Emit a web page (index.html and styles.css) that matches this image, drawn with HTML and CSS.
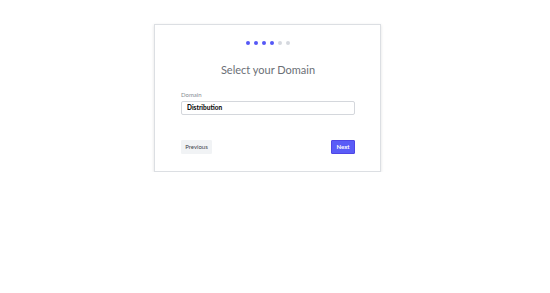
FILE: index.html
```html
<!DOCTYPE html>
<html lang="en">
<head>
<meta charset="utf-8">
<title>Select your Domain</title>
<link rel="stylesheet" href="styles.css">
</head>
<body>
  <div class="card">
    <div class="steps">
      <span class="dot done"></span>
      <span class="dot done"></span>
      <span class="dot done"></span>
      <span class="dot done"></span>
      <span class="dot"></span>
      <span class="dot"></span>
    </div>
    <h1 class="title">Select your Domain</h1>
    <div class="field">
      <label class="label" for="domain">Domain</label>
      <div class="input" id="domain">Distribution</div>
    </div>
    <div class="actions">
      <button class="btn btn-prev">Previous</button>
      <button class="btn btn-next">Next</button>
    </div>
  </div>
</body>
</html>
```
FILE: styles.css
```css
html, body {
  margin: 0;
  padding: 0;
  background: #ffffff;
}
body {
  font-family: Lato, "Open Sans", sans-serif;
}
.card {
  box-sizing: border-box;
  width: 227px;
  margin: 24px 0 0 154px;
  padding: 16px 25px 17px 26px;
  border: 1px solid #dcdfe3;
  background: #fff;
  box-shadow: 0 1px 3px rgba(0, 0, 0, 0.12);
}
.steps {
  display: flex;
  justify-content: center;
  gap: 4px;
  height: 4px;
}
.dot {
  width: 4px;
  height: 4px;
  border-radius: 50%;
  background: #d5d8de;
}
.dot.done {
  background: #5558f6;
}
.title {
  margin: 17px 0 0;
  font-size: 11px;
  line-height: 16px;
  font-weight: 400;
  color: #6b6f76;
  text-align: center;
}
.field {
  margin-top: 13px;
  display: flex;
  flex-direction: column;
}
.label {
  font-size: 6px;
  line-height: 7px;
  color: #878c94;
  margin-bottom: 3px;
}
.input {
  box-sizing: border-box;
  height: 14px;
  border: 1px solid #d4d7dc;
  border-radius: 2px;
  padding: 0 5px;
  font-size: 6.5px;
  line-height: 12px;
  font-weight: 900;
  color: #111;
}
.actions {
  margin-top: 25px;
  display: flex;
  justify-content: space-between;
}
.btn {
  box-sizing: border-box;
  height: 14px;
  padding: 0;
  border-radius: 1px;
  font-family: inherit;
  font-size: 6px;
  line-height: 12px;
}
.btn-prev {
  width: 31px;
  background: #f1f3f5;
  border: 1px solid #f1f3f5;
  color: #3f444b;
}
.btn-next {
  width: 24px;
  background: #5a5cf7;
  border: 1px solid #4f46e5;
  color: #fff;
  font-weight: 700;
}
```
